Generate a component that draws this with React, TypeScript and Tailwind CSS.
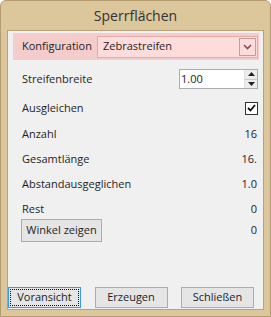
import React from 'react';

const Row: React.FC<{ label: string; value: string }> = ({ label, value }) => (
  <div className="flex items-center justify-between h-[25px] pl-[14px] pr-[6px]">
    <span>{label}</span>
    <span>{value}</span>
  </div>
);

const App: React.FC = () => {
  return (
    <div
      className="w-[271px] h-[317px] bg-[#dcc69c] border border-[#b49b70] rounded-t-[6px] flex flex-col px-[6px] pb-[6px] text-[11px] text-[#1e1e1e]"
      style={{ fontFamily: '"Open Sans", "Noto Sans", sans-serif' }}
    >
      <div className="h-[29px] flex items-center justify-center text-[14px] text-[#333333]">
        Sperrflächen
      </div>
      <div className="flex-1 bg-[#f0f0f0] border border-[#b8a27c] flex flex-col">
        {/* Konfiguration */}
        <div className="mt-[2px] ml-[5px] mr-[4px] h-[27px] bg-[#f4cccc] flex items-center pl-[9px] pr-[1px]">
          <span className="w-[75px]">Konfiguration</span>
          <div className="flex-1 h-[22px] bg-[#ffdcdc] border border-[#e2aaaa] flex items-center pl-[5px] pr-[1px]">
            <span className="flex-1">Zebrastreifen</span>
            <div className="w-[17px] h-[18px] border border-[#c79b9b] flex items-center justify-center">
              <svg width="9" height="6" viewBox="0 0 9 6">
                <path d="M1 1 L4.5 4.5 L8 1" fill="none" stroke="#8a4b4b" strokeWidth="1.6" />
              </svg>
            </div>
          </div>
        </div>

        {/* Streifenbreite */}
        <div className="mt-[9px] flex items-center justify-between pl-[14px] pr-[5px] h-[20px]">
          <span>Streifenbreite</span>
          <div className="w-[79px] h-[20px] bg-white border border-[#abadb3] flex items-center">
            <span className="flex-1 pl-[1px]">1.00</span>
            <div className="w-[13px] h-full flex flex-col border-l border-[#e0e0e0]">
              <div className="flex-1 bg-[#ececec] border-b border-[#c8c8c8] flex items-center justify-center">
                <svg width="7" height="4" viewBox="0 0 7 4"><path d="M0 4 L3.5 0 L7 4 Z" fill="#222" /></svg>
              </div>
              <div className="flex-1 bg-[#ececec] flex items-center justify-center">
                <svg width="7" height="4" viewBox="0 0 7 4"><path d="M0 0 L3.5 4 L7 0 Z" fill="#222" /></svg>
              </div>
            </div>
          </div>
        </div>

        {/* Ausgleichen */}
        <div className="mt-[9px] flex items-center justify-between pl-[14px] pr-[5px] h-[20px]">
          <span>Ausgleichen</span>
          <div className="w-[13px] h-[13px] bg-white border border-[#333] flex items-center justify-center">
            <svg width="9" height="8" viewBox="0 0 9 8">
              <path d="M1 4 L3.5 6.5 L8 1" fill="none" stroke="#111" strokeWidth="1.8" />
            </svg>
          </div>
        </div>

        <div className="mt-[4px]">
          <Row label="Anzahl" value="16" />
          <Row label="Gesamtlänge" value="16." />
          <Row label="Abstandausgeglichen" value="1.0" />
          <Row label="Rest" value="0" />
        </div>

        <div className="flex items-center justify-between pl-[13px] pr-[6px] mt-[-3px]">
          <button className="w-[81px] h-[23px] bg-[#e5e5e5] border border-[#acacac] flex items-center justify-center">
            Winkel zeigen
          </button>
          <span>0</span>
        </div>

        <div className="mt-auto mb-[1px] flex items-center justify-between pr-[9px]">
          <button className="w-[73px] h-[21px] bg-[#e5e5e5] border border-[#3399ff] flex items-center justify-center p-[1px]">
            <span className="w-full h-full border border-dotted border-[#111] flex items-center justify-center">Voransicht</span>
          </button>
          <button className="w-[73px] h-[21px] bg-[#e5e5e5] border border-[#acacac] flex items-center justify-center">
            Erzeugen
          </button>
          <button className="w-[73px] h-[21px] bg-[#e5e5e5] border border-[#acacac] flex items-center justify-center">
            Schließen
          </button>
        </div>
      </div>
    </div>
  );
};

export default App;
